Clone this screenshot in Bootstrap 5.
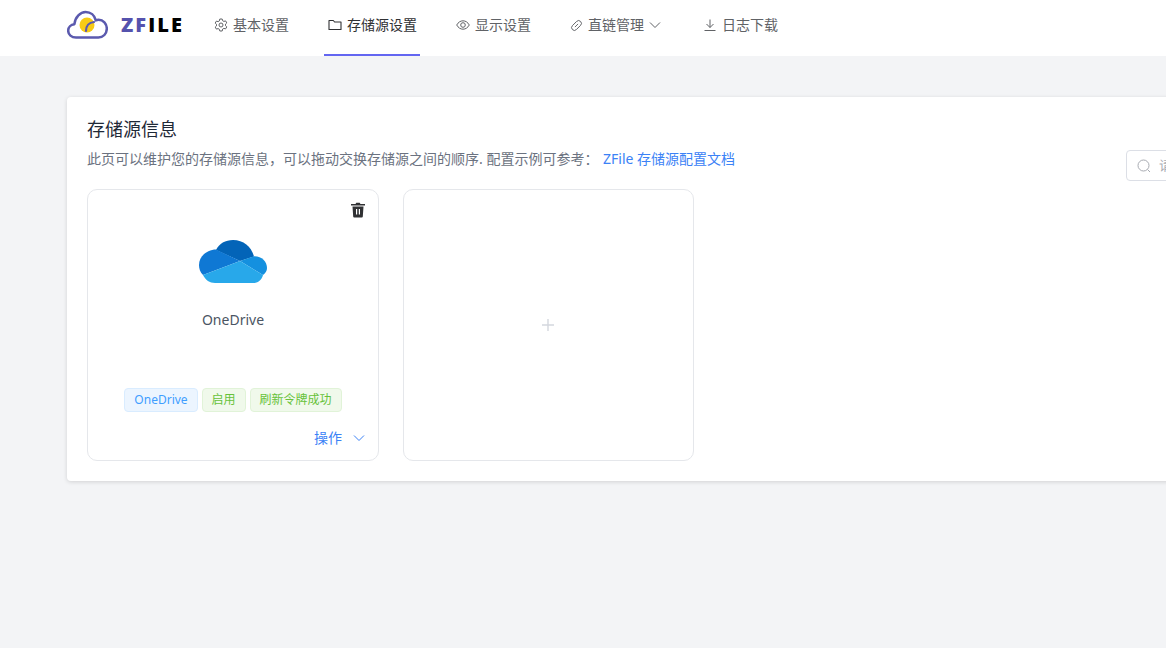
<!DOCTYPE html>
<html lang="zh-CN">
<head>
    <meta charset="UTF-8">
    <meta name="viewport" content="width=device-width, initial-scale=1.0">
    <title>存储源设置</title>
    <link href="https://cdn.jsdelivr.net/npm/bootstrap@5.3.0/dist/css/bootstrap.min.css" rel="stylesheet">
    <style>
        html, body { height: 100%; overflow: hidden; }
        body { background: #f3f4f6; font-family: "Noto Sans", "Noto Sans CJK SC", sans-serif; color: #303133; font-size: 14px; }
        .top-bar { height: 56px; background: #fff; padding-left: 67px; }
        .logo-box { width: 143px; padding-bottom: 7px; }
        .logo-text { font-family: "Open Sans", "Liberation Sans", sans-serif; font-weight: 800; font-size: 20px; letter-spacing: 2.1px; line-height: 1; margin-left: 13px; color: #000; }
        .logo-text b { color: #5552ad; font-weight: 800; }
        .menu-list { gap: 32px; }
        .menu-item { height: 56px; padding: 0 3px 4px 4px; color: #606266; border-bottom: 2px solid transparent; gap: 5px; line-height: 1; white-space: nowrap; }
        .menu-item svg { flex: none; }
        .menu-item.is-on { color: #303133; border-bottom-color: #6366f1; }
        .menu-item.log-item { margin-left: 3px; }
        .page-main { padding: 41px 0 0 67px; width: 1500px; }
        .store-panel { width: 1319px; height: 384px; padding: 20px; border: 0; border-radius: 4px; box-shadow: 0 1px 4px rgba(0,0,0,.14); }
        .panel-title { font-size: 18px; line-height: 24px; font-weight: 400; color: #1f2937; margin: 0 0 8px; }
        .panel-desc { font-size: 14px; line-height: 20px; color: #6b7280; margin: 0; }
        .panel-desc a { color: #3b82f6; text-decoration: none; margin-left: 1px; }
        .search-box { width: 240px; height: 31px; border: 1px solid #dcdfe6; border-radius: 4px; padding-left: 10px; gap: 8px; color: #a8abb2; font-size: 13px; margin-top: 33px; }
        .store-row { gap: 24px; margin-top: 8px; }
        .store-item { width: 292px; height: 272px; border: 1px solid #e5e7eb; border-radius: 10px; }
        .store-item.add-item { width: 291px; padding-right: 2px; }
        .trash-btn { position: absolute; top: 12px; right: 12px; line-height: 0; }
        .drive-logo { margin-top: 50px; }
        .drive-name { margin-top: 27px; line-height: 20px; color: #4b5563; }
        .tag-row { gap: 4px; margin-top: 58px; }
        .tag-item { height: 24px; padding: 0 9px; font-size: 12px; line-height: 22px; border: 1px solid #e1f3d8; background: #f0f9eb; color: #67c23a; border-radius: 4px; }
        .tag-item.tag-blue { border-color: #d9ecff; background: #ecf5ff; color: #409eff; }
        .action-row { margin-top: 16px; padding-right: 13px; gap: 11px; color: #3b82f6; line-height: 20px; }
    </style>
</head>
<body>
<!-- Header -->
<nav class="top-bar d-flex align-items-center">
    <div class="logo-box d-flex align-items-center flex-none">
        <svg width="41" height="30" viewBox="0 0 41 30" fill="none">
            <circle cx="20" cy="15" r="7.5" fill="#f7cb15"/>
            <path d="M9 27.500C4.500 27.500 1.200 24.600 1.200 20.800C1.200 17.300 3.800 14.600 7.400 14.200C8.200 7 13.400 2 18.600 2C23.600 2 27.600 5.300 28.800 10.400C29.600 10 30.600 9.800 31.600 9.800C36.200 9.800 39.800 13.600 39.800 18.600C39.800 23.800 36.200 27.500 31.400 27.500Z" stroke="#5b5aae" stroke-width="2.500" stroke-linejoin="round"/>
            <path d="M19 21C19 16 22 12.500 27 12" stroke="#5b5aae" stroke-width="2.200" stroke-linecap="round"/>
        </svg>
        <span class="logo-text"><b>ZF</b>ILE</span>
    </div>
    <div class="menu-list d-flex">
        <a class="menu-item d-flex align-items-center text-decoration-none">
            <svg width="14" height="14" viewBox="0 0 14 14" fill="none" stroke="#606266"><path d="M5.800 1h2.400l.4 1.700 1.300.7 1.700-.5 1.200 2-1.300 1.200v1.600l1.300 1.200-1.200 2-1.700-.5-1.300.7L8.200 13H5.800l-.4-1.700-1.300-.7-1.700.5-1.200-2 1.300-1.200V6.300L1.200 5.100l1.200-2 1.700.5 1.300-.7z" stroke-linejoin="round"/><circle cx="7" cy="7" r="2"/></svg>
            基本设置
        </a>
        <a class="menu-item is-on d-flex align-items-center text-decoration-none">
            <svg width="14" height="14" viewBox="0 0 14 14" fill="none" stroke="#303133" stroke-width="1.100"><path d="M1 2.500h4.300l1.300 1.500H13v7.500H1z" stroke-linejoin="round"/></svg>
            存储源设置
        </a>
        <a class="menu-item d-flex align-items-center text-decoration-none">
            <svg width="14" height="14" viewBox="0 0 14 14" fill="none" stroke="#606266"><path d="M.7 7C2.300 4.200 4.500 2.800 7 2.800S11.700 4.200 13.300 7C11.700 9.800 9.500 11.200 7 11.200S2.300 9.800.7 7z"/><circle cx="7" cy="7" r="2.300"/></svg>
            显示设置
        </a>
        <a class="menu-item d-flex align-items-center text-decoration-none">
            <svg width="13" height="13" viewBox="0 0 14 14" fill="none" stroke="#606266"><rect x="0.800" y="4" width="12.400" height="6" rx="3" transform="rotate(-45 7 7)"/><path d="M5.600 8.400 8.400 5.600" stroke-linecap="round"/></svg>
            直链管理
            <svg width="12" height="12" viewBox="0 0 12 12" fill="none" stroke="#606266"><path d="M1 3.500 6 8.500 11 3.500"/></svg>
        </a>
        <a class="menu-item log-item d-flex align-items-center text-decoration-none">
            <svg width="14" height="14" viewBox="0 0 14 14" fill="none" stroke="#606266"><path d="M7 1.500v8M3.500 6 7 9.500 10.500 6M1.500 12.500h11"/></svg>
            日志下载
        </a>
    </div>
</nav>

<main class="page-main">
    <div class="card store-panel">
        <div class="d-flex">
            <div>
                <h5 class="panel-title">存储源信息</h5>
                <p class="panel-desc text-nowrap">此页可以维护您的存储源信息，可以拖动交换存储源之间的顺序. 配置示例可参考： <a href="#">ZFile 存储源配置文档</a></p>
            </div>
            <div class="search-box d-flex align-items-center ms-auto">
                <svg width="14" height="14" viewBox="0 0 14 14" fill="none" stroke="#a8abb2"><circle cx="6.500" cy="6.500" r="5.500"/><path d="m10.500 10.500 2.500 2.500"/></svg>
                <span>请输入存储源名称搜索</span>
            </div>
        </div>
        <div class="store-row d-flex">
            <!-- OneDrive -->
            <div class="store-item position-relative d-flex flex-column align-items-center">
                <span class="trash-btn">
                    <svg width="16" height="16" viewBox="0 0 16 16" fill="#303133"><path d="M5.500 2 6.300.8h3.400L10.500 2H15v1.600H1V2z"/><path d="M2.500 4.500h11l-.7 10a1 1 0 0 1-1 1H4.200a1 1 0 0 1-1-1zM6 7v5.500h1.200V7zm2.800 0v5.500H10V7z" fill-rule="evenodd"/></svg>
                </span>
                <svg class="drive-logo" width="68" height="43" viewBox="0 0 68 43">
                    <path d="M17 10C20 3.500 26.500 0 34 0c10.500 0 18.500 7 21 16.500L41 21Z" fill="#0364b8"/>
                    <path d="M17 9.500C9 9.500 0 15.500 0 25c0 3.500 1 7 4 10L41 21Z" fill="#0f78d4"/>
                    <path d="M41 21l14-4.700C62.500 16 68 21.500 68 28c0 2.700-1.400 5.200-4 7Z" fill="#1490df"/>
                    <path d="M4 35 41 21 64 35c-1.500 5-4.500 8-10 8H16C10.500 43 6.500 40 4 35Z" fill="#28a8ea"/>
                </svg>
                <div class="drive-name">OneDrive</div>
                <div class="tag-row d-flex">
                    <span class="tag-item tag-blue">OneDrive</span>
                    <span class="tag-item">启用</span>
                    <span class="tag-item">刷新令牌成功</span>
                </div>
                <div class="action-row d-flex align-items-center align-self-end">
                    <span>操作</span>
                    <svg width="12" height="12" viewBox="0 0 12 12" fill="none" stroke="#3b82f6"><path d="M1 3.500 6 8.500 11 3.500"/></svg>
                </div>
            </div>
            <!-- Add new -->
            <div class="store-item add-item d-flex align-items-center justify-content-center">
                <svg width="14" height="14" viewBox="0 0 14 14" fill="none" stroke="#d4d7de" stroke-width="1.400"><path d="M7 1v12M1 7h12"/></svg>
            </div>
        </div>
    </div>
</main>

<script src="https://cdn.jsdelivr.net/npm/bootstrap@5.3.0/dist/js/bootstrap.bundle.min.js"></script>
</body>
</html>
